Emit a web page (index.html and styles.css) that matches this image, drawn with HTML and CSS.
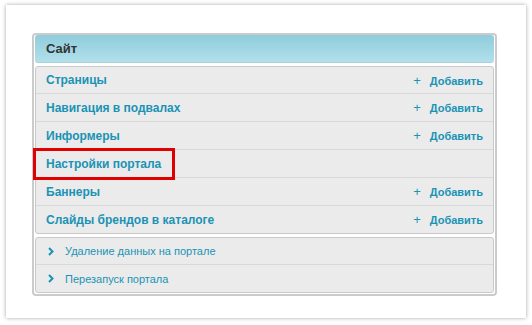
FILE: index.html
```html
<!DOCTYPE html>
<html>
  <head>
    <link rel="stylesheet" href="styles.css">
  </head>
<body>
<div class="card">
  <div class="panel">
    <div class="panel-head">Сайт</div>

    <div class="box">
      <div class="row">
        <a class="title" href="#">Страницы</a>
        <a class="add" href="#"><span class="plus">+</span>Добавить</a>
      </div>
      <div class="row">
        <a class="title" href="#">Навигация в подвалах</a>
        <a class="add" href="#"><span class="plus">+</span>Добавить</a>
      </div>
      <div class="row">
        <a class="title" href="#">Информеры</a>
        <a class="add" href="#"><span class="plus">+</span>Добавить</a>
      </div>
      <div class="row">
        <a class="title marked" href="#">Настройки портала</a>
      </div>
      <div class="row">
        <a class="title" href="#">Баннеры</a>
        <a class="add" href="#"><span class="plus">+</span>Добавить</a>
      </div>
      <div class="row">
        <a class="title" href="#">Слайды брендов в каталоге</a>
        <a class="add" href="#"><span class="plus">+</span>Добавить</a>
      </div>
    </div>

    <div class="box">
      <div class="row small">
        <svg class="chev" width="6" height="9" viewBox="0 0 6 9"><path d="M1 1 L4.5 4.5 L1 8" fill="none" stroke="currentColor" stroke-width="2"/></svg>
        <a class="link" href="#">Удаление данных на портале</a>
      </div>
      <div class="row small">
        <svg class="chev" width="6" height="9" viewBox="0 0 6 9"><path d="M1 1 L4.5 4.5 L1 8" fill="none" stroke="currentColor" stroke-width="2"/></svg>
        <a class="link" href="#">Перезапуск портала</a>
      </div>
    </div>
  </div>
</div>
</body>
</html>
```

FILE: styles.css
```css
* {
  box-sizing: border-box;
}

body {
  margin: 0;
  padding: 5px 6px;
  background: #fff;
  font-family: "Liberation Sans", Arial, sans-serif;
}

a {
  text-decoration: none;
}

.card {
  width: 520px;
  height: 313px;
  background: #fff;
  box-shadow: 0 0 4px rgba(0, 0, 0, 0.35);
  padding: 28px 29px 0 26px;
}

.panel {
  border: 2px solid #cbcbcb;
  border-radius: 4px;
  padding: 0 1px 1px 1px;
  display: flex;
  flex-direction: column;
  gap: 3px;
}

.panel-head {
  height: 28px;
  line-height: 28px;
  padding-left: 11px;
  border-radius: 3px;
  background: linear-gradient(#8fcddd, #b2dfea);
  border-bottom: 1px solid #a9d3de;
  color: #333;
  font-weight: bold;
  font-size: 13px;
}

.box {
  border: 1px solid #c9c9c9;
  border-radius: 3px;
  background: #ebebeb;
}

.row {
  height: 28px;
  display: flex;
  align-items: center;
  padding: 0 10px 0 10px;
  border-top: 1px solid #d8d8d8;
}

.row:first-child {
  border-top: none;
  height: 26px;
}

.title {
  color: #1a93b5;
  font-weight: bold;
  font-size: 12px;
  margin-right: auto;
}

.marked {
  outline: 3px solid #e10000;
  outline-offset: 0;
  padding: 6px 11px 6px 10px;
  margin-left: -10px;
}

.add {
  color: #1a93b5;
  font-weight: bold;
  font-size: 11px;
}

.plus {
  font-weight: normal;
  font-size: 13px;
  margin-right: 9px;
}

.small {
  padding-left: 12px;
}

.chev {
  color: #1a93b5;
  margin-right: 11px;
}

.link {
  color: #1a93b5;
  font-size: 11px;
}
```
